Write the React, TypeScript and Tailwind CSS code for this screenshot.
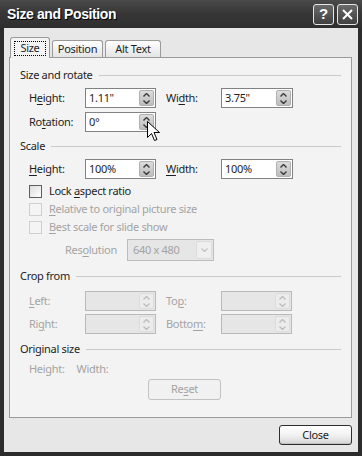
import React from 'react'

const U = ({ c }: { c: string }) => <span className="underline underline-offset-[2px]">{c}</span>

function Chevron({ up, color }: { up: boolean; color: string }) {
  return (
    <svg width="7" height="4" viewBox="0 0 7 4">
      <path d={up ? 'M0.5 3.5 L3.5 0.5 L6.5 3.5' : 'M0.5 0.5 L3.5 3.5 L6.5 0.5'} fill="none" stroke={color} strokeWidth="1.4" />
    </svg>
  )
}

function Spin({ value = '', w, disabled }: { value?: string; w: string; disabled?: boolean }) {
  return (
    <div className={`${w} h-[20px] flex items-stretch border ${disabled ? 'border-[#b9b9b9] bg-[#e6e6e6]' : 'border-[#828282] bg-white'}`}>
      <div className={`flex-1 pl-[3px] flex items-center ${disabled ? 'text-[#a0a0a0]' : 'text-[#1e1e1e]'}`}>{value}</div>
      <div className={`w-[15px] my-[1px] mr-[1px] flex flex-col items-center justify-center gap-[3px] rounded-[2px] border ${disabled ? 'border-[#dcdcdc] bg-[#ececec]' : 'border-[#b0b0b0] bg-gradient-to-b from-[#dcdcdc] to-[#bdbdbd]'}`}>
        <Chevron up color={disabled ? '#bcbcbc' : '#3a3a3a'} />
        <Chevron up={false} color={disabled ? '#bcbcbc' : '#3a3a3a'} />
      </div>
    </div>
  )
}

function Header({ title }: { title: string }) {
  return (
    <div className="h-[16px] flex items-center gap-[6px] text-[#1e1e1e]">
      <span>{title}</span>
      <div className="flex-1 h-px bg-[#c9c9c9]" />
    </div>
  )
}

function Check({ children, disabled }: { children: React.ReactNode; disabled?: boolean }) {
  return (
    <div className={`h-[18px] ml-[9px] flex items-center gap-[7px] ${disabled ? 'text-[#a3a3a3]' : 'text-[#1e1e1e]'}`}>
      <div className={`w-[13px] h-[13px] border ${disabled ? 'border-[#cfcfcf] bg-[#f4f4f4]' : 'border-[#5e5e5e] bg-gradient-to-br from-[#dcdcdc] to-white'}`} />
      <span>{children}</span>
    </div>
  )
}

export default function App() {
  return (
    <div className="w-[362px] h-[456px] bg-[#2c2c2c] px-[4px] pb-[4px] flex flex-col font-['Noto_Sans',sans-serif] text-[11px] tracking-[-0.3px] relative overflow-hidden">
      {/* Title bar */}
      <div className="h-[28px] -mx-[4px] px-[7px] flex items-center bg-gradient-to-b from-[#4a4a4a] via-[#363636] to-[#2e2e2e]">
        <span className="font-['Liberation_Sans',sans-serif] font-bold text-[14px] tracking-[-0.4px] text-white [text-shadow:1px_1px_0_#000]">Size and Position</span>
        <div className="ml-auto flex gap-[3px] mr-[-3px]">
          <div className="w-[21px] h-[21px] rounded-[3px] border border-[#e6e6e6] bg-gradient-to-b from-[#6a6a6a] to-[#404040] flex items-center justify-center text-white font-bold text-[15px] font-['Liberation_Sans',sans-serif]">?</div>
          <div className="w-[21px] h-[21px] rounded-[3px] border border-[#e6e6e6] bg-gradient-to-b from-[#6a6a6a] to-[#404040] flex items-center justify-center">
            <svg width="11" height="11" viewBox="0 0 11 11"><path d="M1 1 L10 10 M10 1 L1 10" stroke="white" strokeWidth="2" /></svg>
          </div>
        </div>
      </div>

      {/* Body */}
      <div className="flex-1 bg-[#e7e7e7] pl-[5px] pr-[6px] pt-[9px] flex flex-col">
        {/* Tabs */}
        <div className="flex items-end h-[20px] relative z-10 text-[#1e1e1e]">
          <div className="w-[40px] h-[21px] -mb-[1px] px-[3px] pt-[3px] bg-[#f3f3f3] border border-b-0 border-[#9a9a9a] rounded-t-[3px] ml-[1px]">
            <div className="border border-dotted border-black h-[15px] flex items-center justify-center">Size</div>
          </div>
          <div className="h-[17px] w-[51px] ml-[2px] flex items-center justify-center bg-gradient-to-b from-white to-[#e4e4e4] border border-b-0 border-[#9a9a9a] rounded-t-[3px]">Position</div>
          <div className="h-[17px] w-[56px] ml-[2px] flex items-center justify-center bg-gradient-to-b from-white to-[#e4e4e4] border border-b-0 border-[#9a9a9a] rounded-t-[3px]">Alt Text</div>
        </div>

        {/* Panel */}
        <div className="h-[361px] bg-[#f3f3f3] border border-[#9a9a9a] pl-[10px] pr-[10px] pt-[9px] flex flex-col">
          <Header title="Size and rotate" />
          <div className="mt-[5px] ml-[9px] h-[20px] flex items-center text-[#1e1e1e]">
            <span className="w-[56px]">H<U c="e" />ight:</span>
            <Spin value={'1.11"'} w="w-[71px]" />
            <span className="w-[55px] ml-[10px]">Wi<U c="d" />th:</span>
            <Spin value={'3.75"'} w="w-[72px]" />
          </div>
          <div className="mt-[4px] ml-[9px] h-[20px] flex items-center text-[#1e1e1e]">
            <span className="w-[56px]">Ro<U c="t" />ation:</span>
            <Spin value="0°" w="w-[71px]" />
          </div>

          <div className="mt-[6px]"><Header title="Scale" /></div>
          <div className="mt-[5px] ml-[9px] h-[20px] flex items-center text-[#1e1e1e]">
            <span className="w-[56px]"><U c="H" />eight:</span>
            <Spin value="100%" w="w-[71px]" />
            <span className="w-[55px] ml-[10px]"><U c="W" />idth:</span>
            <Spin value="100%" w="w-[72px]" />
          </div>
          <div className="mt-[3px]"><Check>Lock <U c="a" />spect ratio</Check></div>
          <Check disabled><U c="R" />elative to original picture size</Check>
          <Check disabled><U c="B" />est scale for slide show</Check>
          <div className="mt-[3px] ml-[45px] h-[22px] flex items-center text-[#a3a3a3]">
            <span className="w-[62px]">Res<U c="o" />lution</span>
            <div className="w-[87px] h-[22px] border border-[#bdbdbd] bg-[#e6e6e6] flex items-stretch">
              <div className="flex-1 pl-[5px] flex items-center">640 x 480</div>
              <div className="w-[16px] m-[1px] border border-[#dcdcdc] bg-[#efefef] rounded-[2px] flex items-center justify-center">
                <Chevron up={false} color="#c4c4c4" />
              </div>
            </div>
          </div>

          <div className="mt-[7px]"><Header title="Crop from" /></div>
          <div className="mt-[7px] ml-[9px] h-[20px] flex items-center text-[#a3a3a3]">
            <span className="w-[56px]"><U c="L" />eft:</span>
            <Spin w="w-[71px]" disabled />
            <span className="w-[55px] ml-[10px]">To<U c="p" />:</span>
            <Spin w="w-[71px]" disabled />
          </div>
          <div className="mt-[3px] ml-[9px] h-[20px] flex items-center text-[#a3a3a3]">
            <span className="w-[56px]">Ri<U c="g" />ht:</span>
            <Spin w="w-[71px]" disabled />
            <span className="w-[55px] ml-[10px]">Botto<U c="m" />:</span>
            <Spin w="w-[71px]" disabled />
          </div>

          <div className="mt-[7px]"><Header title="Original size" /></div>
          <div className="mt-[4px] ml-[9px] h-[16px] flex items-center gap-[12px] text-[#a3a3a3]">
            <span>Height:</span>
            <span>Width:</span>
          </div>
          <div className="mt-[2px] ml-[128px] w-[73px] h-[21px] rounded-[3px] border border-[#c2c2c2] bg-[#f1f1f1] flex items-center justify-center text-[#a3a3a3]">
            Re<U c="s" />et
          </div>
        </div>

        <div className="mt-[7px] flex justify-end">
          <div className="w-[73px] h-[20px] rounded-[3px] border border-[#2e2e2e] bg-gradient-to-b from-white via-[#f2f2f2] to-[#d6d6d6] flex items-center justify-center text-[#1e1e1e] shadow-[inset_0_-1px_0_#c0c0c0]">
            Close
          </div>
        </div>
      </div>

      {/* mouse cursor */}
      <svg className="absolute left-[147px] top-[121px]" width="14" height="22" viewBox="0 0 14 22">
        <path d="M0.5 0.5 L0.5 16.5 L4.5 12.5 L7.5 19.5 L10 18.5 L7 11.5 L12.5 11.5 Z" fill="white" stroke="black" strokeWidth="1" strokeLinejoin="miter" />
      </svg>
    </div>
  )
}
